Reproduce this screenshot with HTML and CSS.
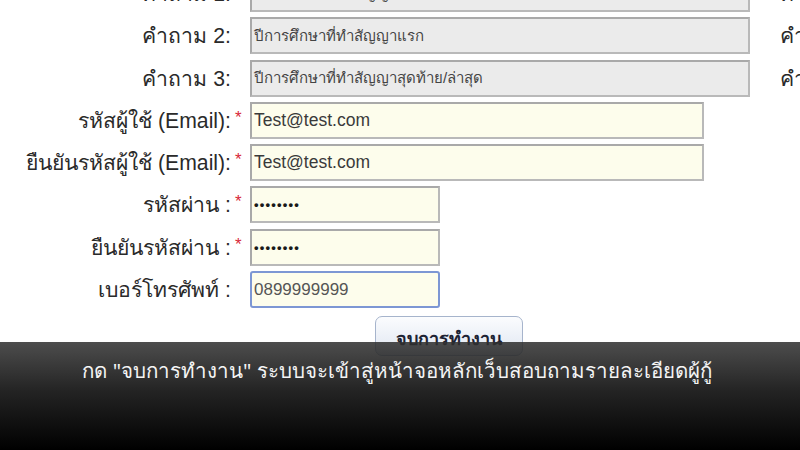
FILE: index.html
```html
<!DOCTYPE html>
<html lang="th">
<head>
<meta charset="utf-8">
<link rel="stylesheet" href="styles.css">
</head>
<body>
<div class="screen">
  <form class="form">
    <div class="row">
      <label class="label">คำถาม 1:</label><span class="star"></span>
      <div class="field grey wide">ปีการศึกษาที่ทำสัญญา</div>
      <span class="side">คำ</span>
    </div>
    <div class="row">
      <label class="label">คำถาม 2:</label><span class="star"></span>
      <div class="field grey wide">ปีการศึกษาที่ทำสัญญาแรก</div>
      <span class="side">คำ</span>
    </div>
    <div class="row">
      <label class="label">คำถาม 3:</label><span class="star"></span>
      <div class="field grey wide">ปีการศึกษาที่ทำสัญญาสุดท้าย/ล่าสุด</div>
      <span class="side">คำ</span>
    </div>
    <div class="row">
      <label class="label">รหัสผู้ใช้ (Email):</label><span class="star">*</span>
      <div class="field yellow mid">Test@test.com</div>
    </div>
    <div class="row">
      <label class="label">ยืนยันรหัสผู้ใช้ (Email):</label><span class="star">*</span>
      <div class="field yellow mid">Test@test.com</div>
    </div>
    <div class="row">
      <label class="label">รหัสผ่าน :</label><span class="star">*</span>
      <div class="field yellow short dots">••••••••</div>
    </div>
    <div class="row">
      <label class="label">ยืนยันรหัสผ่าน :</label><span class="star">*</span>
      <div class="field yellow short dots">••••••••</div>
    </div>
    <div class="row">
      <label class="label">เบอร์โทรศัพท์ :</label><span class="star"></span>
      <div class="field yellow short focus">0899999999</div>
    </div>
    <div class="actions">
      <button type="button" class="btn">จบการทำงาน</button>
    </div>
  </form>
  <div class="caption">
    <p class="caption-text">กด "จบการทำงาน" ระบบจะเข้าสู่หน้าจอหลักเว็บสอบถามรายละเอียดผู้กู้</p>
  </div>
</div>
</body>
</html>
```

FILE: styles.css
```css
html, body {
  margin: 0;
  padding: 0;
  background: #ffffff;
}
.screen {
  position: relative;
  width: 800px;
  height: 450px;
  overflow: hidden;
  background: #ffffff;
  font-family: Tahoma, "Liberation Sans", "DejaVu Sans", sans-serif;
}
.form {
  display: flex;
  flex-direction: column;
  gap: 5.3px;
  margin-top: -25px;
}
.row {
  display: grid;
  grid-template-columns: 232px 18px auto 1fr;
  align-items: center;
  height: 37px;
}
.label {
  text-align: right;
  font-size: 21.2px;
  color: #2a2a2a;
  white-space: nowrap;
  padding-right: 1px;
}
.star {
  color: #d8283a;
  font-size: 17px;
  padding-left: 3px;
  align-self: start;
  padding-top: 6px;
}
.field {
  box-sizing: border-box;
  height: 37px;
  padding: 0 2px;
  display: flex;
  align-items: center;
  font-size: 17.5px;
  color: #3a3a3a;
  border: 2px solid #b9b9b9;
  border-top-color: #a9a9a9;
  border-left-color: #a9a9a9;
  white-space: nowrap;
  overflow: hidden;
}
.grey {
  background: #ebebeb;
  font-size: 15px;
  color: #444;
}
.yellow {
  background: #fdfdec;
}
.wide { width: 500px; }
.mid { width: 454px; }
.short { width: 190px; }
.dots {
  font-size: 13px;
  letter-spacing: 1.2px;
  color: #1a1a1a;
  font-weight: bold;
}
.focus {
  border-color: #7d97d4;
  border-radius: 3px;
  color: #555;
  font-size: 17px;
}
.side {
  justify-self: end;
  font-size: 21.2px;
  color: #2a2a2a;
  margin-right: -6px;
}
.actions {
  display: flex;
  justify-content: center;
  padding-top: 3px;
  padding-left: 97px;
}
.btn {
  width: 148px;
  height: 40px;
  border: 1px solid #a6b4cc;
  border-radius: 7px;
  background: linear-gradient(#fbfcfe, #dfe6f1);
  font-family: Tahoma, "Liberation Sans", "DejaVu Sans", sans-serif;
  font-size: 18px;
  font-weight: bold;
  color: #1d2333;
  padding-top: 6px;
}
.caption {
  position: absolute;
  left: 0;
  right: 0;
  bottom: 0;
  height: 108px;
  background: linear-gradient(rgba(48, 48, 48, 0.86) 0%, rgba(24, 24, 24, 0.95) 45%, #000 100%);
}
.caption-text {
  margin: 12px 0 0;
  text-align: center;
  color: #f4f4f4;
  font-size: 20.5px;
  font-family: "Noto Sans", "Liberation Sans", sans-serif;
  padding-right: 6px;
}
```
